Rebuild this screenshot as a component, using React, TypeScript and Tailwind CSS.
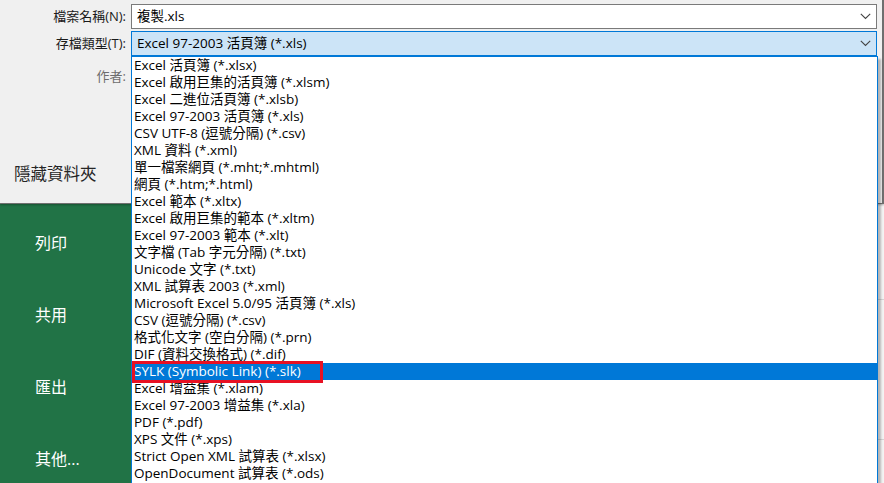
import React from "react";

const items = [
  "Excel 活頁簿 (*.xlsx)",
  "Excel 啟用巨集的活頁簿 (*.xlsm)",
  "Excel 二進位活頁簿 (*.xlsb)",
  "Excel 97-2003 活頁簿 (*.xls)",
  "CSV UTF-8 (逗號分隔) (*.csv)",
  "XML 資料 (*.xml)",
  "單一檔案網頁 (*.mht;*.mhtml)",
  "網頁 (*.htm;*.html)",
  "Excel 範本 (*.xltx)",
  "Excel 啟用巨集的範本 (*.xltm)",
  "Excel 97-2003 範本 (*.xlt)",
  "文字檔 (Tab 字元分隔) (*.txt)",
  "Unicode 文字 (*.txt)",
  "XML 試算表 2003 (*.xml)",
  "Microsoft Excel 5.0/95 活頁簿 (*.xls)",
  "CSV (逗號分隔) (*.csv)",
  "格式化文字 (空白分隔) (*.prn)",
  "DIF (資料交換格式) (*.dif)",
  "SYLK (Symbolic Link) (*.slk)",
  "Excel 增益集 (*.xlam)",
  "Excel 97-2003 增益集 (*.xla)",
  "PDF (*.pdf)",
  "XPS 文件 (*.xps)",
  "Strict Open XML 試算表 (*.xlsx)",
  "OpenDocument 試算表 (*.ods)",
];

function Chevron() {
  return (
    <svg width="11" height="7" viewBox="0 0 11 7" className="shrink-0">
      <path d="M0.8 0.8 L5.5 5.5 L10.2 0.8" fill="none" stroke="#444" strokeWidth="1.1" />
    </svg>
  );
}

export default function App() {
  const font = "font-['Segoe_UI','Open_Sans','Noto_Sans_CJK_TC',sans-serif]";
  return (
    <div className={`relative w-[884px] h-[483px] overflow-hidden bg-[#f3f3f3] ${font}`}>
      {/* dialog area */}
      <div className="h-[204px] w-[884px] bg-[#f0f0f0] border-r-2 border-b border-[#6f6f6f] shadow-[0_1px_2px_rgba(0,0,0,0.3)] relative z-10">
        <div className="flex items-center pt-[4px]">
          <div className="w-[131px] pr-[5px] text-right text-[13px] text-[#1a1a1a]">檔案名稱(N):</div>
          <div className="w-[746px] h-[25px] border border-[#7a7a7a] bg-white flex items-center justify-between pl-[5px] pr-[5px] text-[13.5px] text-black">
            <span>複製.xls</span>
            <Chevron />
          </div>
        </div>
        <div className="flex items-center pt-[2px]">
          <div className="w-[131px] pr-[5px] text-right text-[13px] text-[#1a1a1a]">存檔類型(T):</div>
          <div className="w-[746px] h-[25px] border border-[#0078d7] bg-[#cce4f7] flex items-center justify-between pl-[5px] pr-[5px] text-[13.5px] text-black">
            <span>Excel 97-2003 活頁簿 (*.xls)</span>
            <Chevron />
          </div>
        </div>
        <div className="flex items-center pt-[11px]">
          <div className="w-[131px] pr-[5px] text-right text-[13px] text-[#6d6d6d]">作者:</div>
        </div>
        <div className="pt-[75px] pl-[14px] text-[16.5px] text-[#262626]">隱藏資料夾</div>
      </div>
      {/* backstage */}
      <div className="flex h-[279px]">
        <div className="w-[131px] h-full bg-[#217346] text-white text-[16px] flex flex-col pl-[35px] pt-[28px] gap-[50px]">
          <div className="h-[22px] leading-[22px]">列印</div>
          <div className="h-[22px] leading-[22px]">共用</div>
          <div className="h-[22px] leading-[22px]">匯出</div>
          <div className="h-[22px] leading-[22px]">其他...</div>
        </div>
        <div className="flex-1 flex flex-col">
          <div className="h-[96px] border-b border-[#d4d4d4]" />
          <div className="h-[140px] border-b border-[#d4d4d4]" />
        </div>
      </div>
      {/* dropdown list */}
      <div className="absolute left-[131px] top-[56px] w-[747px] h-[428px] border border-[#0078d7] bg-white z-20 shadow-[3px_3px_2px_rgba(0,0,0,0.25)]">
        {items.map((t, i) => {
          const sel = i === 18;
          return (
            <div
              key={i}
              className={`h-[17px] leading-[17px] pl-[2px] text-[13.5px] whitespace-nowrap ${sel ? "bg-[#0078d7] text-white" : "text-black"}`}
            >
              {t}
            </div>
          );
        })}
        <div className="absolute left-[0px] top-[304px] w-[191px] h-[22px] border-[3px] border-[#e81123]" />
      </div>
    </div>
  );
}
